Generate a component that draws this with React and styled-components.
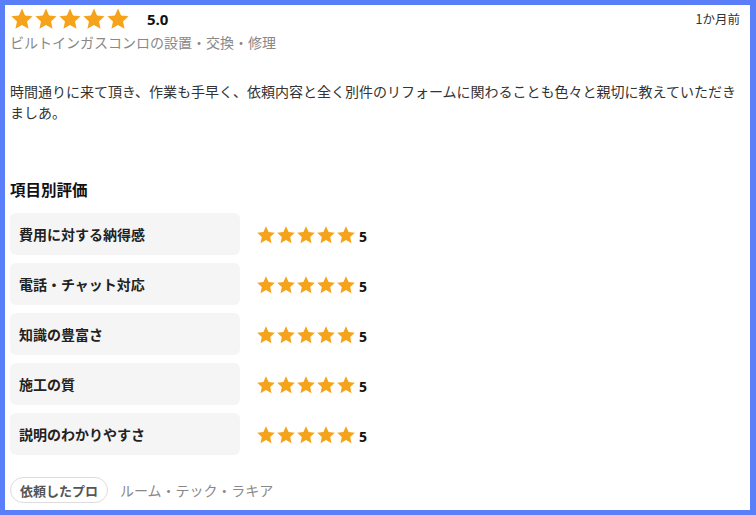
import React from 'react';
import styled, { createGlobalStyle } from 'styled-components';

const GlobalStyle = createGlobalStyle`
  html, body {
    margin: 0;
    padding: 0;
    background: #fff;
  }
  body {
    font-family: "Noto Sans CJK JP", "Noto Sans", sans-serif;
    color: #333;
  }
`;

const ratings = [
  { label: '費用に対する納得感', score: 5 },
  { label: '電話・チャット対応', score: 5 },
  { label: '知識の豊富さ', score: 5 },
  { label: '施工の質', score: 5 },
  { label: '説明のわかりやすさ', score: 5 },
];

const Star = ({ size }) => (
  <svg width={size} height={size} viewBox="0 0 24 24">
    <path
      d="M12 1.6l3.1 6.9 7.5.8-5.6 5.1 1.6 7.4L12 18l-6.6 3.8 1.6-7.4-5.6-5.1 7.5-.8z"
      fill="#f5a31a"
    />
  </svg>
);

const Stars = ({ size, gap }) => (
  <StarRow $gap={gap}>
    {[0, 1, 2, 3, 4].map((i) => (
      <Star key={i} size={size} />
    ))}
  </StarRow>
);

const App = () => (
  <>
    <GlobalStyle />
    <Frame>
      <Header>
        <div>
          <ScoreLine>
            <Stars size={24} gap={-0.5} />
            <Score>5.0</Score>
          </ScoreLine>
          <Service>ビルトインガスコンロの設置・交換・修理</Service>
        </div>
        <Date>1か月前</Date>
      </Header>

      <Comment>
        時間通りに来て頂き、作業も手早く、依頼内容と全く別件のリフォームに関わることも色々と親切に教えていただきましあ。
      </Comment>

      <Heading>項目別評価</Heading>
      <RatingList>
        {ratings.map((r) => (
          <RatingRow key={r.label}>
            <RatingLabel>{r.label}</RatingLabel>
            <RatingValue>
              <Stars size={20} gap={-0.5} />
              <RatingNum>{r.score}</RatingNum>
            </RatingValue>
          </RatingRow>
        ))}
      </RatingList>

      <Footer>
        <Pill>依頼したプロ</Pill>
        <ProName>ルーム・テック・ラキア</ProName>
      </Footer>
    </Frame>
  </>
);

const Frame = styled.div`
  box-sizing: border-box;
  width: 756px;
  height: 515px;
  border: 5px solid #5a7ff8;
  border-right-width: 6px;
  padding: 2px 5px 0 5px;
  overflow: hidden;
`;

const Header = styled.div`
  display: flex;
  justify-content: space-between;
  align-items: flex-start;
`;

const ScoreLine = styled.div`
  display: flex;
  align-items: center;
  height: 24px;
`;

const StarRow = styled.div`
  display: flex;
  gap: ${(p) => p.$gap}px;
  svg {
    display: block;
  }
`;

const Score = styled.span`
  font-family: "Open Sans", "Noto Sans", sans-serif;
  font-weight: 700;
  font-size: 15px;
  color: #111;
  margin-left: 17px;
`;

const Service = styled.div`
  font-size: 14px;
  color: #888;
  line-height: 20px;
  margin-top: 1px;
`;

const Date = styled.div`
  font-size: 12.5px;
  color: #333;
  margin-top: 2px;
  margin-right: 5px;
`;

const Comment = styled.p`
  margin: 29px 0 0;
  font-size: 14px;
  line-height: 21px;
  color: #333;
`;

const Heading = styled.h3`
  margin: 56px 0 0;
  font-size: 15.5px;
  font-weight: 700;
  color: #111;
  line-height: 20px;
`;

const RatingList = styled.div`
  display: flex;
  flex-direction: column;
  gap: 8px;
  margin-top: 14px;
`;

const RatingRow = styled.div`
  display: flex;
  align-items: center;
`;

const RatingLabel = styled.div`
  box-sizing: border-box;
  width: 230px;
  height: 42px;
  display: flex;
  align-items: center;
  padding-left: 9px;
  background: #f5f5f5;
  border-radius: 6px;
  font-size: 14px;
  font-weight: 700;
  color: #222;
`;

const RatingValue = styled.div`
  display: flex;
  align-items: center;
  margin-left: 16px;
  margin-top: 2px;
`;

const RatingNum = styled.span`
  font-family: "Open Sans", "Noto Sans", sans-serif;
  font-weight: 700;
  font-size: 14px;
  color: #111;
  margin-left: 3px;
  margin-top: 3px;
`;

const Footer = styled.div`
  display: flex;
  align-items: center;
  margin-top: 22px;
`;

const Pill = styled.span`
  box-sizing: border-box;
  height: 26px;
  padding: 0 9px;
  display: inline-flex;
  align-items: center;
  border: 1px solid #ddd;
  border-radius: 13px;
  font-size: 13px;
  font-weight: 700;
  color: #555;
`;

const ProName = styled.span`
  margin-left: 12px;
  font-size: 14px;
  color: #888;
`;

export default App;
